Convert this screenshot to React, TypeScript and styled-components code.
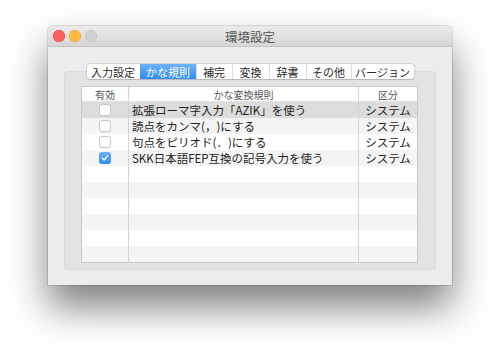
import styled, { createGlobalStyle } from 'styled-components';

const GlobalStyle = createGlobalStyle`
    html, body {
        margin : 0;
        padding : 0;
        background : #ffffff;
        font-family : "Noto Sans CJK JP", "Noto Sans", "Liberation Sans", sans-serif;
        text-spacing-trim : space-all;
    }
`;

const Page = styled.div`
    width : 500px;
    height : 353px;
    padding : 26px 0 0 48px;
    box-sizing : border-box;
    overflow : hidden;
`;

const Window = styled.div`
    width : 404px;
    height : 259px;
    background : #ececec;
    border-radius : 5px 5px 0 0;
    box-shadow : 0 0 0 1px rgba(0,0,0,0.12), 0 22px 38px rgba(0,0,0,0.5);
    display : flex;
    flex-direction : column;
    overflow : hidden;
`;

const TitleBar = styled.div`
    height : 20px;
    flex-shrink : 0;
    display : flex;
    align-items : center;
    position : relative;
    background : linear-gradient(#ebebeb, #d6d6d6);
    border-bottom : 1px solid #c4c4c4;
    padding-left : 5px;
    gap : 4px;
`;

const Light = styled.span<{ $color: string; $edge: string }>`
    width : 12px;
    height : 12px;
    border-radius : 50%;
    background : ${p => p.$color};
    box-shadow : inset 0 0 0 0.5px ${p => p.$edge};
`;

const Title = styled.div`
    position : absolute;
    left : 0;
    right : 0;
    text-align : center;
    font-size : 12.5px;
    color : #555555;
    pointer-events : none;
`;

const Content = styled.div`
    flex : 1;
    padding : 17px 16px 17px;
    display : flex;
    flex-direction : column;
`;

const TabBar = styled.div`
    display : flex;
    justify-content : center;
    position : relative;
    z-index : 1;
`;

const Tabs = styled.div`
    display : flex;
    background : #ffffff;
    border-radius : 3px;
    box-shadow : 0 0 0 0.5px rgba(0,0,0,0.18), 0 1px 1px rgba(0,0,0,0.12);
    overflow : hidden;
`;

const Tab = styled.div<{ $w: number; $active?: boolean }>`
    width : ${p => p.$w}px;
    height : 15px;
    display : flex;
    align-items : center;
    justify-content : center;
    font-size : 11px;
    color : ${p => (p.$active ? '#ffffff' : '#2a2a2a')};
    background : ${p => (p.$active ? 'linear-gradient(#6cb3fa, #2f8bf5)' : 'transparent')};
    border-left : 1px solid ${p => (p.$active ? 'transparent' : '#dcdcdc')};
    &:first-child {
        border-left : none;
    }
`;

const Group = styled.div`
    flex : 1;
    margin-top : -8px;
    background : #e3e3e3;
    border : 1px solid #dadada;
    border-radius : 4px;
    padding : 14px 17px 6px 16px;
    display : flex;
    flex-direction : column;
`;

const Table = styled.div`
    background : #ffffff;
    border : 1px solid #c9c9c9;
    display : flex;
    flex-direction : column;
`;

const Row = styled.div<{ $header?: boolean; $selected?: boolean; $odd?: boolean }>`
    display : grid;
    grid-template-columns : 46px 230px 1fr;
    height : ${p => (p.$header ? 14 : 16)}px;
    background : ${p => (p.$selected ? '#dcdcdc' : p.$odd ? '#f4f4f4' : '#ffffff')};
    ${p => p.$header && 'border-bottom : 1px solid #e2e2e2;'}
`;

const Cell = styled.div<{ $align?: string; $header?: boolean }>`
    display : flex;
    align-items : center;
    justify-content : ${p => p.$align || 'flex-start'};
    padding-left : ${p => (p.$align ? 0 : 3)}px;
    font-size : ${p => (p.$header ? 10 : 11.5)}px;
    color : ${p => (p.$header ? '#555555' : '#1e1e1e')};
    border-left : 1px solid #d4d4d4;
    white-space : nowrap;
    overflow : hidden;
    &:first-child {
        border-left : none;
    }
`;

const Check = styled.span<{ $on?: boolean }>`
    width : 12px;
    height : 12px;
    border-radius : 3px;
    box-sizing : border-box;
    display : flex;
    align-items : center;
    justify-content : center;
    background : ${p => (p.$on ? 'linear-gradient(#69b1fa, #2d8af4)' : '#ffffff')};
    border : ${p => (p.$on ? 'none' : '1px solid #c7c7c7')};
    box-shadow : ${p => (p.$on ? 'none' : '0 0.5px 0.5px rgba(0,0,0,0.08)')};
`;

const tabs = [
    { label: '入力設定', w: 53 },
    { label: 'かな規則', w: 55, active: true },
    { label: '補完', w: 35 },
    { label: '変換', w: 36 },
    { label: '辞書', w: 36 },
    { label: 'その他', w: 44 },
    { label: 'バージョン', w: 62 },
];

const rules = [
    { on: false, text: '拡張ローマ字入力「AZIK」を使う', kind: 'システム' },
    { on: false, text: '読点をカンマ(，)にする', kind: 'システム' },
    { on: false, text: '句点をピリオド(．)にする', kind: 'システム' },
    { on: true, text: 'SKK日本語FEP互換の記号入力を使う', kind: 'システム' },
];

const App = () => {
    const rows = Array.from({ length: 10 }, (_, i) => rules[i]);

    return (
        <Page>
            <GlobalStyle />
            <Window>
                <TitleBar>
                    <Light $color="#fc605c" $edge="#de4a45" />
                    <Light $color="#fdbc40" $edge="#dea032" />
                    <Light $color="#d0d0d0" $edge="#bdbdbd" />
                    <Title>環境設定</Title>
                </TitleBar>
                <Content>
                    <TabBar>
                        <Tabs>
                            {tabs.map(t => (
                                <Tab key={t.label} $w={t.w} $active={t.active}>{t.label}</Tab>
                            ))}
                        </Tabs>
                    </TabBar>
                    <Group>
                        <Table>
                            <Row $header>
                                <Cell $header $align="center">有効</Cell>
                                <Cell $header $align="center">かな変換規則</Cell>
                                <Cell $header $align="center">区分</Cell>
                            </Row>
                            {rows.map((r, i) => (
                                <Row key={i} $selected={i === 0} $odd={i % 2 === 1}>
                                    <Cell $align="center">
                                        {r && (
                                            <Check $on={r.on}>
                                                {r.on && (
                                                    <svg width="8" height="8" viewBox="0 0 8 8">
                                                        <path d="M1.3 4.2 L3.2 6 L6.8 1.6" fill="none" stroke="#fff" strokeWidth="1.4" strokeLinecap="round" strokeLinejoin="round" />
                                                    </svg>
                                                )}
                                            </Check>
                                        )}
                                    </Cell>
                                    <Cell>{r?.text}</Cell>
                                    <Cell $align="center">{r?.kind}</Cell>
                                </Row>
                            ))}
                        </Table>
                    </Group>
                </Content>
            </Window>
        </Page>
    );
};

export default App;
